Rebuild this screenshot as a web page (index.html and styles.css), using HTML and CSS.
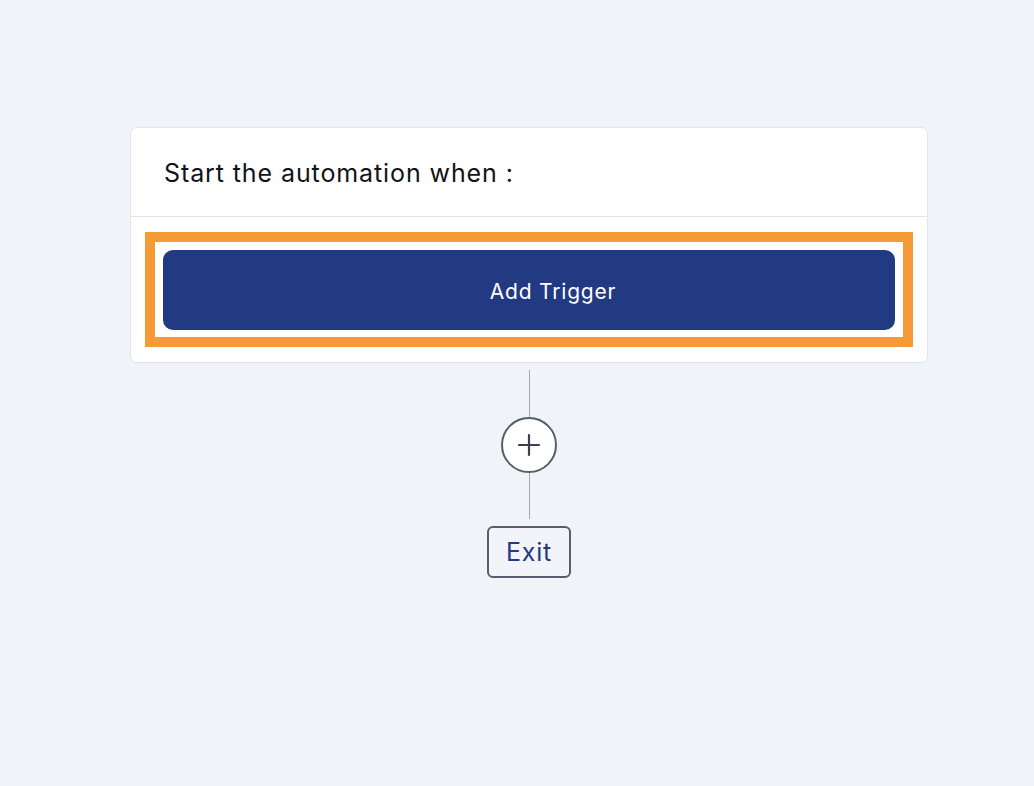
FILE: index.html
```html
<!DOCTYPE html>
<html>
<head>
<meta charset="utf-8">
<link rel="stylesheet" href="styles.css">
</head>
<body>
<main class="canvas">
  <section class="card">
    <div class="card-header">Start the automation when :</div>
    <div class="card-body">
      <div class="highlight">
        <button class="trigger-btn">Add Trigger</button>
      </div>
    </div>
  </section>
  <div class="connector">
    <div class="line line-top"></div>
    <button class="add-step" aria-label="Add step">
      <svg width="24" height="24" viewBox="0 0 24 24" fill="none" stroke="#3a4150" stroke-width="2.2" stroke-linecap="round"><path d="M12 2v20M2 12h20"/></svg>
    </button>
    <div class="line line-bottom"></div>
    <div class="exit">Exit</div>
  </div>
</main>
</body>
</html>
```
FILE: styles.css
```css
html, body {
  margin: 0;
  padding: 0;
  background: #f0f3f8;
  font-family: "Inter", "Noto Sans", sans-serif;
}
.canvas {
  display: flex;
  flex-direction: column;
  align-items: center;
  padding-top: 127px;
  padding-left: 24px;
  min-height: 786px;
  box-sizing: border-box;
}
.card {
  width: 798px;
  background: #ffffff;
  border: 1px solid #e1e4ea;
  border-radius: 7px;
  box-sizing: border-box;
}
.card-header {
  height: 89px;
  box-sizing: border-box;
  padding: 2px 0 0 33px;
  display: flex;
  align-items: center;
  font-size: 25px;
  color: #111318;
  letter-spacing: 0.9px;
  border-bottom: 1px solid #e1e4ea;
}
.card-body {
  padding: 15px 14px 15px 14px;
}
.highlight {
  border: 10px solid #f59a34;
  padding: 8px 8px 7px 8px;
}
.trigger-btn {
  display: block;
  width: 100%;
  height: 80px;
  border: none;
  border-radius: 10px;
  background: #223a82;
  color: #ffffff;
  font-family: inherit;
  font-size: 21px;
  letter-spacing: 0.8px;
  padding: 2px 0 0 48px;
  cursor: pointer;
}
.connector {
  display: flex;
  flex-direction: column;
  align-items: center;
  margin-top: 7px;
}
.line {
  width: 1px;
  background: #a3a7af;
}
.line-top { height: 47px; }
.line-bottom { height: 46px; }
.add-step {
  width: 56px;
  height: 56px;
  border-radius: 50%;
  border: 2px solid #565d6c;
  background: #ffffff;
  display: flex;
  align-items: center;
  justify-content: center;
  padding: 0;
  box-sizing: border-box;
}
.exit {
  margin-top: 7px;
  width: 84px;
  height: 52px;
  box-sizing: border-box;
  border: 2px solid #565d6c;
  border-radius: 6px;
  background: #f2f4f9;
  display: flex;
  align-items: center;
  justify-content: center;
  font-size: 25px;
  letter-spacing: 0.8px;
  color: #223a82;
}
```
